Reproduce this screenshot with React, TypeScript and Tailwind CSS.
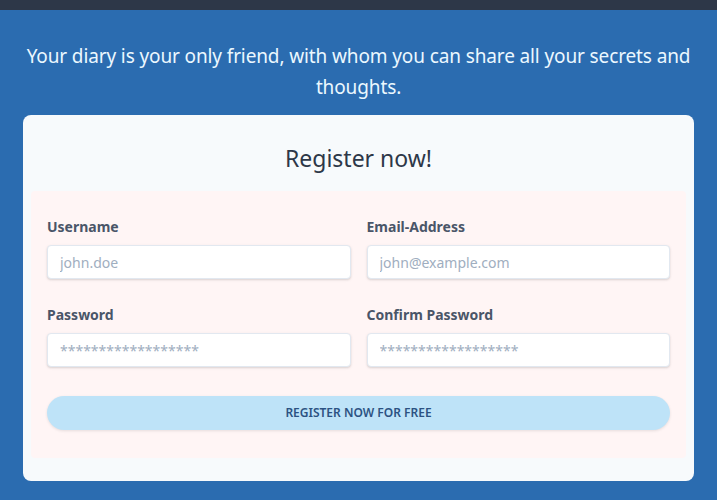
import React from "react";

function Field({ label, placeholder }: { label: string; placeholder: string }) {
  return (
    <div className="flex flex-col">
      <label className="text-[14px] leading-5 font-bold text-[#4a5568] mb-2">{label}</label>
      <input
        className="h-[34px] w-full rounded bg-white border border-[#e2e8f0] shadow-[0_1px_3px_0_rgba(0,0,0,0.1),0_1px_2px_0_rgba(0,0,0,0.06)] px-3 text-[14px] text-[#4a5568] placeholder:text-[#a0aec0] outline-none"
        placeholder={placeholder}
      />
    </div>
  );
}

export default function App() {
  return (
    <div
      className="min-h-[500px] bg-[#2b6cb0] flex flex-col"
      style={{ fontFamily: '"Noto Sans", "Open Sans", sans-serif' }}
    >
      <div className="h-[10px] bg-[#2d3748]" />
      <div className="px-[23px]">
        <p className="mt-[31px] -mx-2 text-center text-[19px] leading-[31px] tracking-[-0.12px] text-[#ebf8ff]">
          Your diary is your only friend, with whom you can share all your secrets and thoughts.
        </p>
        <div className="mt-[12px] bg-[#f7fafc] rounded-lg px-2 pb-[23px]">
          <h2 className="pt-[27px] pb-[17px] text-center text-[23px] leading-8 text-[#2d3748]">
            Register now!
          </h2>
          <div className="bg-[#fff5f5] rounded px-4 pt-[26px] pb-[28px]">
            <div className="grid grid-cols-2 gap-x-4 gap-y-[26px]">
              <Field label="Username" placeholder="john.doe" />
              <Field label="Email-Address" placeholder="john@example.com" />
              <Field label="Password" placeholder="******************" />
              <Field label="Confirm Password" placeholder="******************" />
            </div>
            <button className="mt-[29px] w-full h-[34px] rounded-full bg-[#bee3f8] text-[#2c5282] text-[12px] font-semibold uppercase shadow-[0_1px_3px_0_rgba(0,0,0,0.1)]">
              Register now for free
            </button>
          </div>
        </div>
      </div>
    </div>
  );
}
